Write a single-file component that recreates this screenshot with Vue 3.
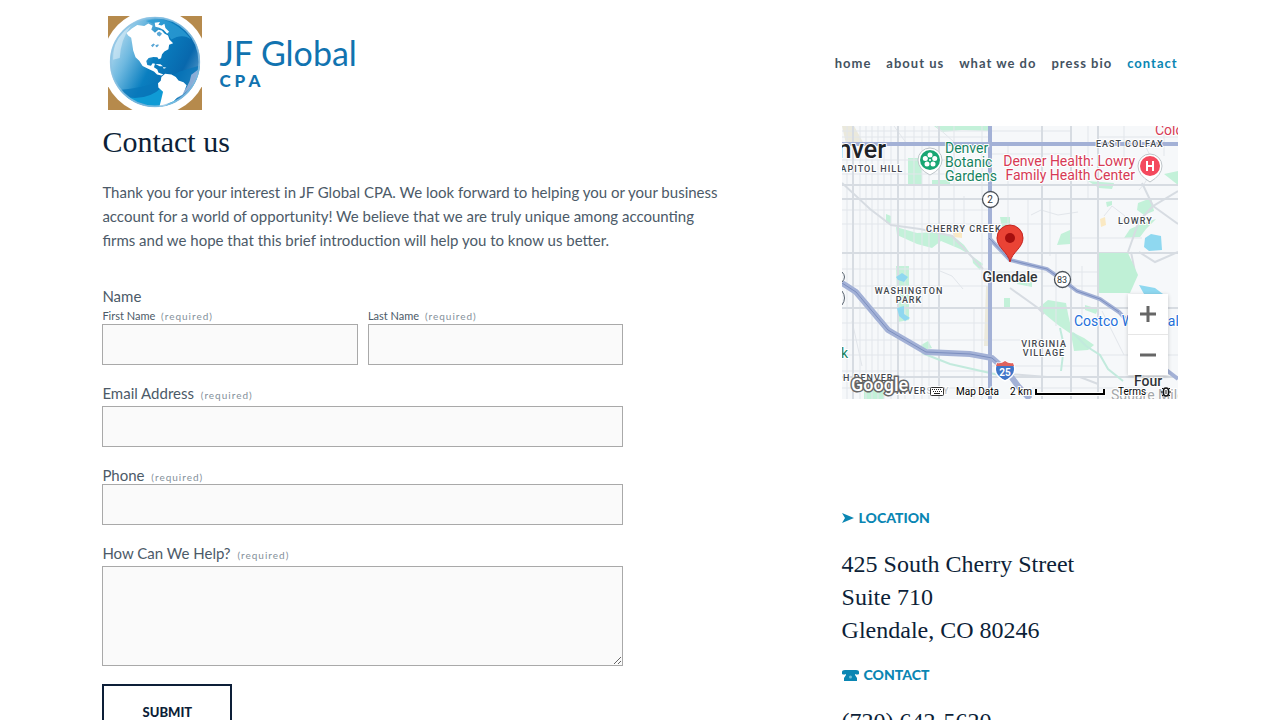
<script setup>
import { ref } from 'vue'

const links = ['home', 'about us', 'what we do', 'press bio', 'contact']
const current = 'contact'
const form = ref({ first: '', last: '', email: '', phone: '', help: '' })

const westStreets = [5, 18, 24, 30, 36, 42, 49, 63, 72, 80, 87]
const eastStreets = [
  [112, 0, 120], [122, 70, 105], [132, 182, 273], [140, 0, 273], [166, 18, 120], [186, 73, 160],
  [208, 73, 130], [214, 127, 200], [240, 140, 200], [246, 0, 73], [282, 0, 40], [301, 182, 273], [322, 0, 30]
]
const westAvenues = [5, 11, 34, 48, 84, 98, 143, 160, 197, 214, 229, 245, 262]
const eastAvenues = [
  [5, 148, 229], [11, 256, 336], [28, 148, 229], [98, 148, 229], [112, 229, 300], [146, 148, 256],
  [160, 200, 256], [214, 148, 200], [229, 256, 336], [240, 148, 256], [262, 190, 300]
]
const majorX = [11, 56, 97, 200, 229, 256]
const majorY = [59, 73, 127, 182, 251]
</script>

<template>
  <div class="page">
    <header class="header">
      <a class="brand" href="#" aria-label="JF Global CPA">
        <svg class="globe" viewBox="37 25 280 280" aria-hidden="true">
          <defs>
            <linearGradient id="sea" x1="0" y1="0.2" x2="1" y2="0.7">
              <stop offset="0" stop-color="#c4e2f2" />
              <stop offset="0.25" stop-color="#6fb9e0" />
              <stop offset="0.5" stop-color="#0a7fc0" />
              <stop offset="0.8" stop-color="#0868ad" />
              <stop offset="1" stop-color="#5b9ccb" />
            </linearGradient>
            <clipPath id="disc"><circle cx="177" cy="162" r="134" /></clipPath>
            <clipPath id="square"><rect x="37" y="25" width="280" height="280" /></clipPath>
          </defs>
          <rect x="37" y="25" width="280" height="280" fill="#b68a4c" />
          <circle cx="177" cy="163" r="157" fill="#fff" clip-path="url(#square)" />
          <circle cx="177" cy="162" r="134" fill="url(#sea)" />
          <g clip-path="url(#disc)">
            <path d="M50 245Q160 245 250 190L320 170V310H50Z" fill="#0877ba" opacity=".75" />
            <path d="M70 262Q150 285 200 235L250 290L180 300Z" fill="#11a5dc" opacity=".8" />
            <path d="M150 40Q225 20 285 95Q260 75 225 95L205 60Z" fill="#2c9bd3" opacity=".8" />
            <path d="M245 270Q300 235 305 185L285 200Q280 235 245 270Z" fill="#a9b9dd" opacity=".8" />
            <path d="M52 155Q52 85 105 55Q75 95 72 150Z" fill="#e3f2fa" opacity=".5" />
            <path d="M92 76L108 62L124 52L145 55L157 47L170 54L166 65L177 75L187 66L197 68L205 77L216 83L220 95L231 106L219 111L217 124L205 131L198 139L195 151L188 154L184 148L172 147L158 150L151 159L154 171L165 173L170 166L177 167L174 178L184 184L187 193L202 199L196 202L183 199L174 190L158 183L140 174L130 158L119 148L112 128L109 108L106 90L97 83Z" fill="#fff" />
            <path d="M176 45L192 43L187 51L197 53L205 48L208 61L219 72L213 78L203 67L190 60L178 57Z" fill="#fff" />
            <path d="M178 168L193 169L201 175L191 175ZM201 177L211 179L203 182Z" fill="#fff" />
            <path d="M196 207L207 197L226 199L239 207L247 217L262 222L271 231L266 245L259 259L242 269L232 279L216 286L205 297L190 295L195 276L201 251L187 238L186 225L194 218Z" fill="#fff" />
            <path d="M165 113L172 107L177 110L174 113L170 118ZM178 112L187 109L188 113L183 118L180 117ZM182 76L190 71L198 78L191 86L184 82Z" fill="#5aa7d6" />
          </g>
          <circle cx="177" cy="162" r="132" fill="none" stroke="#8fc3e4" stroke-width="5" opacity=".8" />
        </svg>
        <span class="wordmark">
          <span class="name">JF Global</span>
          <span class="cpa">CPA</span>
        </span>
      </a>
      <nav class="nav">
        <a v-for="l in links" :key="l" href="#" :class="{ on: l === current }">{{ l }}</a>
      </nav>
    </header>

    <main class="columns">
      <section class="left">
        <h1>Contact us</h1>
        <p class="intro">
          Thank you for your interest in JF Global CPA. We look forward to helping you or your business
          account for a world of opportunity! We believe that we are truly unique among accounting
          firms and we hope that this brief introduction will help you to know us better.
        </p>
        <form class="form" @submit.prevent>
          <fieldset>
            <legend>Name</legend>
            <div class="pair">
              <div class="cell">
                <label class="small" for="first">First Name <span class="req">(required)</span></label>
                <input id="first" v-model="form.first" type="text" />
              </div>
              <div class="cell">
                <label class="small" for="last">Last Name <span class="req">(required)</span></label>
                <input id="last" v-model="form.last" type="text" />
              </div>
            </div>
          </fieldset>
          <div class="field">
            <label for="email">Email Address <span class="req">(required)</span></label>
            <input id="email" v-model="form.email" type="email" />
          </div>
          <div class="field tight">
            <label for="phone">Phone <span class="req">(required)</span></label>
            <input id="phone" v-model="form.phone" type="tel" />
          </div>
          <div class="field">
            <label for="help">How Can We Help? <span class="req">(required)</span></label>
            <textarea id="help" v-model="form.help"></textarea>
          </div>
          <button type="submit" class="submit">SUBMIT</button>
        </form>
      </section>

      <aside class="right">
        <div class="map">
          <svg class="canvas" viewBox="0 0 336 273" role="img" aria-label="Map of Glendale">
            <rect width="336" height="273" fill="#f6f8fa" />
            <g fill="#c3f1d9">
              <path d="M66 32H80V60H66ZM90 54H108V60H90ZM92 0H146V5L120 4L100 6Z" />
              <path d="M44 88L49 90V97H44ZM54 101L75 107L95 106L110 109L122 119L130 130L118 123L99 115L90 122L75 118L55 109Z" />
              <path d="M54 140H67V194L56 196ZM79 219L86 215L90 222L78 225ZM22 264H42V273H22Z" />
              <path d="M130 130L141 138L138 144L131 137ZM158 91H168V102H160ZM162 172H168V182H162Z" />
              <path d="M296 77L309 72L312 85L302 89L295 84ZM322 48L336 45V59ZM219 108L228 104V118L215 119ZM264 76L270 75L270 79L265 81Z" />
              <path d="M288 103L304 96L314 93L304 103L298 111L282 112ZM246 55L272 57L270 63L257 62Z" />
              <path d="M178 151L190 156V161L175 158ZM243 179L256 183L254 188L243 184Z" />
              <path d="M196 182L206 174L224 177L226 188L230 206L242 212L252 219L246 224L232 225L229 208L216 199L205 190Z" />
            </g>
            <path d="M0 0H12L22 18H4ZM144 160H149V220H142Z" fill="#ebe9dc" />
            <path d="M258 93L263 91L264 99L259 101ZM110 104L120 106L120 112L112 111Z" fill="#fae9c3" />
            <g fill="none" stroke="#e2e6eb" stroke-width="1">
              <path v-for="x in westStreets" :key="'w' + x" :d="`M${x} 0V273`" />
              <path v-for="s in eastStreets" :key="'e' + s[0]" :d="`M${s[0]} ${s[1]}V${s[2]}`" />
              <path v-for="y in westAvenues" :key="'a' + y" :d="`M0 ${y}H148`" />
              <path v-for="a in eastAvenues" :key="'b' + a[0]" :d="`M${a[1]} ${a[0]}H${a[2]}`" />
              <path d="M94 0L112 16V48M52 0L65 18M98 145L110 150L121 163M189 89L199 84L216 89L236 86M262 90L270 80L283 90L278 100M10 195L20 240M260 185L282 229M300 16Q320 40 297 64" />
            </g>
            <g fill="none" stroke="#d7dce2" stroke-width="2">
              <path v-for="x in majorX" :key="'X' + x" :d="`M${x} 0V273`" />
              <path v-for="y in majorY" :key="'Y' + y" :d="`M0 ${y}H336`" />
              <path d="M0 57L28 83L49 99L78 103L110 110L131 132L141 143M168 162L196 182L202 188M300 57L311 80L336 65M311 80L336 98M297 126L313 136L336 126M289 126L293 146L284 162M168 248L205 251H238L256 258M311 80L297 95L286 126" />
            </g>
            <path d="M257 127H286L296 149L288 167H257Z" fill="#bff0d6" />
            <path d="M80 227L108 238L157 249M231 207L244 220L258 229L266 243L281 255M218 202L222 220L219 245" fill="none" stroke="#c2eadd" stroke-width="2" />
            <g fill="#8fd8f0">
              <path d="M303 112L309 108L319 110L320 124L307 125L302 121ZM54 151L60 147L66 151L62 156L56 154ZM55 182L62 180L62 188L68 192L63 195L57 190ZM297 159L313 162L321 168L312 169L302 168Z" />
            </g>
            <g fill="none" stroke="#a3b1d6">
              <path d="M0 18H336" stroke-width="4" />
              <path d="M148 0V273" stroke-width="4" />
              <path d="M147 112L168 134L180 137L205 143L222 155L235 165L258 173L277 186L290 200M314 236L336 253" stroke-width="4" />
              <path d="M0 157L14 166L46 204L84 226L128 228L150 232L165 245L176 260L188 273" stroke-width="6" />
            </g>
            <g fill="none" stroke="#7c8fc0" stroke-width="1">
              <path d="M0 157L14 166L46 204L84 226L128 228L150 232L165 245" />
              <path d="M147 112L168 134L180 137L205 143L222 155L235 165L258 173L277 186" />
            </g>
            <path d="M0 146Q5 151 0 156M0 165Q5 172 0 179" fill="none" stroke="#56606c" stroke-width="1" />

            <g class="halo">
              <text x="44" y="32" class="city" text-anchor="end">nver</text>
              <text x="61" y="46" class="area" text-anchor="end">CAPITOL HILL</text>
              <text x="254" y="21" class="area">EAST COLFAX</text>
              <text x="276" y="98" class="area">LOWRY</text>
              <text x="84" y="106" class="area">CHERRY CREEK</text>
              <text x="67" y="168" class="area" text-anchor="middle">WASHINGTON</text>
              <text x="67" y="177" class="area" text-anchor="middle">PARK</text>
              <text x="202" y="221" class="area" text-anchor="middle">VIRGINIA</text>
              <text x="202" y="230" class="area" text-anchor="middle">VILLAGE</text>
              <text x="1" y="255" class="area">H DENVER</text>
              <text x="54" y="268" class="area">NIVER<tspan class="faint">SITY</tspan></text>
              <text x="168" y="156" class="town" text-anchor="middle">Glendale</text>
              <g class="place green">
                <text x="103" y="27">Denver</text>
                <text x="103" y="41">Botanic</text>
                <text x="103" y="55">Gardens</text>
                <text x="-1" y="232">k</text>
              </g>
              <g class="place red">
                <text x="293" y="40" text-anchor="end">Denver Health: Lowry</text>
                <text x="293" y="54" text-anchor="end">Family Health Center</text>
                <text x="313" y="9">Colorado</text>
              </g>
              <text x="232" y="200" class="place blue">Costco Wholesale</text>
              <text x="306" y="260" class="town" text-anchor="middle">Four</text>
              <text x="269" y="274" class="place grey">Square Mile</text>
            </g>

            <path d="M88 49Q76 43 76 34A12 12 0 0 1 100 34Q100 43 88 49Z" fill="#fff" stroke="#bfc6ca" stroke-width="1" />
            <circle cx="88" cy="34" r="10" fill="#18a673" />
            <g fill="#fff">
              <circle cx="88" cy="29" r="2.5" /><circle cx="92.7" cy="32.5" r="2.5" />
              <circle cx="91" cy="38" r="2.5" /><circle cx="85" cy="38" r="2.5" /><circle cx="83.3" cy="32.5" r="2.5" />
            </g>
            <circle cx="88" cy="34" r="1" fill="#fff" />
            <path d="M308 56Q296 49 296 40A12 12 0 0 1 320 40Q320 49 308 56Z" fill="#fff" stroke="#bfc6ca" stroke-width="1" />
            <circle cx="308" cy="40" r="10" fill="#f4495d" />
            <path d="M305 35V45M311 35V45M305 40H311" stroke="#fff" stroke-width="2" />

            <circle cx="148.5" cy="73.5" r="8" fill="#fff" stroke="#4a5159" stroke-width="1.3" />
            <text x="148" y="77" class="shield">2</text>
            <circle cx="220.5" cy="153.5" r="8" fill="#fff" stroke="#4a5159" stroke-width="1.3" />
            <text x="220" y="157" class="shield sm">83</text>
            <path d="M155 237Q159 238 163 235Q167 238 171 237Q177 248 163 255Q149 248 155 237Z" fill="#3f75c8" stroke="#fff" stroke-width="1.5" />
            <path d="M155 237Q159 238 163 235Q167 238 171 237L172 240H154Z" fill="#e0625c" />
            <text x="163" y="250" class="shield inter">25</text>

            <path d="M168 136C166 126 155 122 155 112A13 13 0 0 1 181 112C181 122 170 126 168 136Z" fill="#ea4335" stroke="#c5221f" stroke-width="1" />
            <circle cx="168" cy="112" r="5" fill="#a50e0e" />

            <text x="9" y="265" class="google">Google</text>
            <rect x="88.5" y="261.5" width="13" height="8" rx="1" fill="#fff" stroke="#333" />
            <path d="M90 263.5H100M91 265.5H101" stroke="#222" stroke-width="1" stroke-dasharray="1 1" />
            <path d="M92 267.5H98" stroke="#222" />
            <g class="legal">
              <text x="114" y="269">Map Data</text>
              <text x="168" y="269">2 km</text>
              <text x="276" y="269">Terms</text>
            </g>
            <path d="M194 263V268H262V263" fill="none" stroke="#fff" stroke-width="4" />
            <path d="M194 263V268H262V263" fill="none" stroke="#000" stroke-width="2" />
            <path d="M319 266H329M320 270L328 262M320 262L328 270" stroke="#111" />
            <rect x="321.5" y="262" width="5" height="8" rx="2.5" fill="#fff" stroke="#111" stroke-width="1.5" />
            <path d="M323 265H325M323 267H325" stroke="#111" />
          </svg>
          <div class="zoomer">
            <button type="button" aria-label="Zoom in">
              <svg viewBox="0 0 18 18"><path d="M9 1V17M1 9H17" /></svg>
            </button>
            <button type="button" aria-label="Zoom out">
              <svg viewBox="0 0 18 18"><path d="M1 9H17" /></svg>
            </button>
          </div>
        </div>

        <h2>
          <svg class="mark" viewBox="0 0 12 12" aria-hidden="true"><path d="M0 1L12 6L0 11L3 6Z" /></svg>
          LOCATION
        </h2>
        <address>425 South Cherry Street<br />Suite 710<br />Glendale, CO 80246</address>
        <h2>
          <svg class="mark wide" viewBox="0 0 17 12" aria-hidden="true">
            <path d="M0 5V3Q0 1 3 1H14Q17 1 17 3V5Q15 6 13 5V4H4V5Q2 6 0 5Z" />
            <path d="M4 4H13V6L15 9V12H2V9L4 6Z" />
            <circle class="dial" cx="8.5" cy="8" r="1.5" />
          </svg>
          CONTACT
        </h2>
        <address>(720) 642-5620</address>
      </aside>
    </main>
  </div>
</template>

<style>
body {
  background: #fff;
}
</style>

<style scoped>
.page {
  box-sizing: border-box;
  padding: 16px 8% 0;
  font-family: Lato, "DejaVu Sans", sans-serif;
  font-size: 15px;
  line-height: 24px;
  color: #4c5a68;
}
a {
  color: inherit;
  text-decoration: none;
}
.header {
  display: flex;
  align-items: center;
  justify-content: space-between;
}
.brand {
  display: flex;
  align-items: center;
  gap: 17px;
  padding-left: 6px;
  color: #1173b0;
}
.globe {
  width: 94px;
  height: 94px;
}
.wordmark {
  display: flex;
  flex-direction: column;
}
.name {
  font-size: 34px;
  line-height: 36px;
}
.cpa {
  font-size: 17px;
  line-height: 20px;
  font-weight: 900;
  letter-spacing: 4px;
}
.nav {
  display: flex;
  gap: 15px;
  font-size: 13px;
  font-weight: 700;
  letter-spacing: 1px;
  color: #44525f;
}
.nav .on {
  color: #0a86b3;
}
.columns {
  display: grid;
  grid-template-columns: 11fr 5fr;
  padding-top: 16px;
}
h1 {
  margin: 0 0 22px;
  font: 400 30px/32px "Liberation Serif", serif;
  color: #0d1f38;
}
.intro {
  max-width: 620px;
  margin: 0 0 32px;
}
.form {
  max-width: 521px;
}
fieldset {
  margin: 0;
  padding: 0;
  border: 0;
}
legend {
  padding: 0;
}
.pair {
  display: grid;
  grid-template-columns: 1fr 1fr;
  gap: 10px;
}
label {
  display: block;
}
.small {
  font-size: 11px;
  line-height: 16px;
}
.req {
  padding-left: 3px;
  font-size: 10px;
  letter-spacing: 1px;
  color: #84909a;
}
.field {
  margin-top: 16px;
}
.field input,
.field textarea {
  margin-top: -1px;
}
.tight input {
  margin-top: -5px;
}
input,
textarea {
  display: block;
  box-sizing: border-box;
  width: 100%;
  height: 41px;
  padding: 8px;
  border: 1px solid #a9a9a9;
  border-radius: 0;
  background: #fafafa;
  font: inherit;
}
textarea {
  height: 100px;
}
.submit {
  width: 130px;
  height: 56px;
  margin-top: 18px;
  padding: 0;
  border: 2px solid #0d1f38;
  background: #fff;
  font: 900 13px/16px Lato, sans-serif;
  color: #0d1f38;
}
.map {
  position: relative;
  margin-bottom: 107px;
}
.canvas {
  display: block;
  width: 100%;
  font-family: Roboto, sans-serif;
}
.halo text {
  paint-order: stroke;
  stroke: #fff;
  stroke-width: 2px;
  stroke-linejoin: round;
}
.city {
  font-size: 25px;
  font-weight: 500;
  fill: #202327;
}
.town {
  font-size: 14px;
  font-weight: 500;
  fill: #303439;
}
.area {
  font-size: 9px;
  font-weight: 500;
  letter-spacing: 1px;
  fill: #43484e;
}
.faint {
  fill: #c2c6ca;
}
.place {
  font-size: 14px;
}
.green {
  fill: #16835f;
}
.red {
  fill: #d63a55;
}
.blue {
  fill: #1e6fdb;
}
.grey {
  fill: #a4a7aa;
}
.shield {
  font-size: 10px;
  text-anchor: middle;
  fill: #2e3338;
}
.sm {
  font-size: 9px;
}
.inter {
  font-weight: 700;
  fill: #fff;
}
.google {
  font-size: 18px;
  font-weight: 500;
  fill: #fff;
  stroke: #666;
  stroke-width: 3px;
  paint-order: stroke;
}
.legal {
  font-size: 10px;
  fill: #000;
}
.legal text {
  paint-order: stroke;
  stroke: #fff;
  stroke-width: 2px;
}
.zoomer {
  position: absolute;
  right: 10px;
  bottom: 24px;
  display: flex;
  flex-direction: column;
  width: 40px;
  background: #fff;
  box-shadow: 0 1px 4px rgba(0, 0, 0, 0.2);
}
.zoomer button {
  display: grid;
  place-items: center;
  height: 40px;
  padding: 0;
  border: 0;
  background: none;
}
.zoomer button + button {
  border-top: 1px solid #e6e6e6;
  height: 41px;
}
.zoomer svg {
  width: 18px;
  height: 18px;
  fill: none;
  stroke: #666;
  stroke-width: 3px;
}
h2 {
  display: flex;
  align-items: center;
  gap: 5px;
  margin: 0 0 18px;
  font-size: 14px;
  line-height: 24px;
  font-weight: 900;
  color: #0a86b3;
}
.mark {
  width: 12px;
  height: 12px;
  fill: currentColor;
}
.wide {
  width: 17px;
}
.dial {
  fill: #6fbdd6;
}
address {
  margin-bottom: 16px;
  font: normal 24px/33px "Liberation Serif", serif;
  color: #0d1f38;
}
</style>
